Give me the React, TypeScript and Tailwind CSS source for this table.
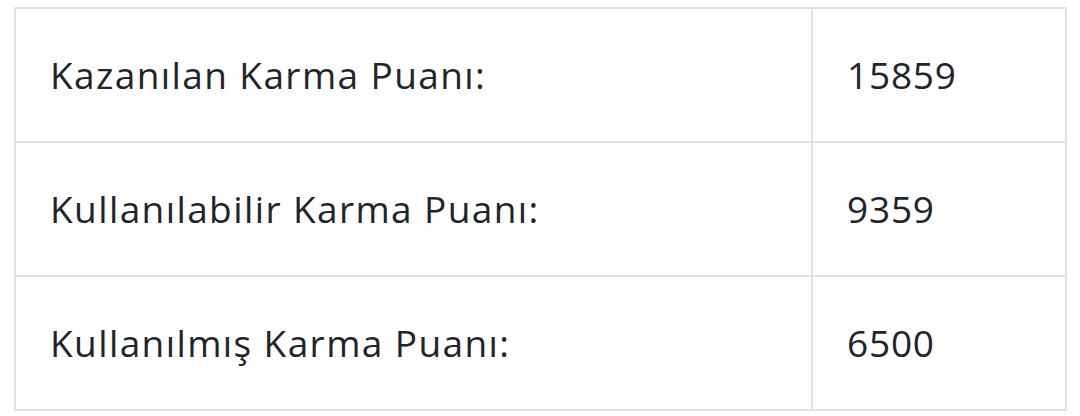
import React from "react";

const rows: [string, string][] = [
  ["Kazanılan Karma Puanı:", "15859"],
  ["Kullanılabilir Karma Puanı:", "9359"],
  ["Kullanılmış Karma Puanı:", "6500"],
];

export default function App() {
  return (
    <div className="w-[1080px] h-[416px] bg-white pt-[7px] pl-[14px]" style={{ fontFamily: '"Open Sans", "Noto Sans", sans-serif' }}>
      <div className="w-[1053px] border-2 border-[#dee2e6] text-[#212529] text-[37px]">
        {rows.map(([k, v], i) => (
          <div key={i} className={i < 2 ? "grid grid-cols-[797px_1fr] h-[134px] border-b-2 border-[#dee2e6]" : "grid grid-cols-[797px_1fr] h-[132px]"}>
            <div className="flex items-center pl-[34px] border-r-2 border-[#dee2e6] tracking-[1.4px]">{k}</div>
            <div className="flex items-center pl-[34px] tracking-[0.8px]">{v}</div>
          </div>
        ))}
      </div>
    </div>
  );
}
